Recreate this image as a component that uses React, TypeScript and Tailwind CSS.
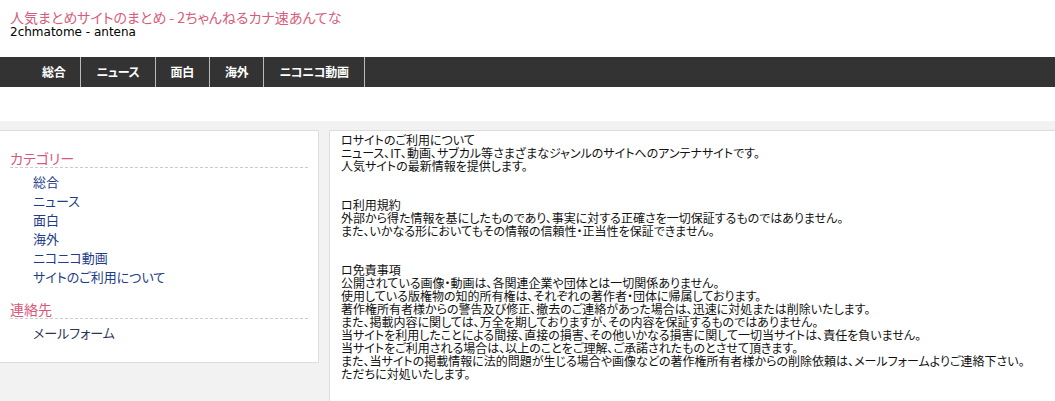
const NAV = ["総合", "ニュース", "面白", "海外", "ニコニコ動画"];

const CATEGORIES = ["総合", "ニュース", "面白", "海外", "ニコニコ動画", "サイトのご利用について"];

const SECTIONS = [
  {
    title: "ロサイトのご利用について",
    lines: [
      "ニュース、IT、動画、サブカル等さまざまなジャンルのサイトへのアンテナサイトです。",
      "人気サイトの最新情報を提供します。",
    ],
  },
  {
    title: "ロ利用規約",
    lines: [
      "外部から得た情報を基にしたものであり、事実に対する正確さを一切保証するものではありません。",
      "また、いかなる形においてもその情報の信頼性・正当性を保証できません。",
    ],
  },
  {
    title: "ロ免責事項",
    lines: [
      "公開されている画像・動画は、各関連企業や団体とは一切関係ありません。",
      "使用している版権物の知的所有権は、それぞれの著作者・団体に帰属しております。",
      "著作権所有者様からの警告及び修正、撤去のご連絡があった場合は、迅速に対処または削除いたします。",
      "また、掲載内容に関しては、万全を期しておりますが、その内容を保証するものではありません。",
      "当サイトを利用したことによる間接、直接の損害、その他いかなる損害に関して一切当サイトは、責任を負いません。",
      "当サイトをご利用される場合は、以上のことをご理解、ご承諾されたものとさせて頂きます。",
      "また、当サイトの掲載情報に法的問題が生じる場合や画像などの著作権所有者様からの削除依頼は、メールフォームよりご連絡下さい。",
      "ただちに対処いたします。",
    ],
  },
];

export default function App() {
  return (
    <div className="min-h-[401px] bg-white font-['Noto_Sans_CJK_JP',sans-serif] [font-feature-settings:'palt'] text-[#111]">
      {/* header */}
      <div className="pt-[8px] pl-[10px] h-[57px]">
        <div className="text-[14px] leading-[18px] text-[#d65d7d]">
          人気まとめサイトのまとめ - 2ちゃんねるカナ速あんてな
        </div>
        <div className="font-['DejaVu_Sans',sans-serif] text-[12px] leading-[12px] text-black">
          2chmatome - antena
        </div>
      </div>

      <nav className="h-[30px] bg-[#333] flex pl-[27px]">
        {NAV.map((item) => (
          <a
            key={item}
            className="px-[15px] border-r border-[#bbb] text-white text-[12px] font-bold tracking-[-0.3px] leading-[30px]"
          >
            {item}
          </a>
        ))}
      </nav>

      <div className="h-[34px]" />

      <div className="bg-[#f2f2f2] pt-[9px] flex items-start">
        {/* sidebar */}
        <div className="w-[319px] shrink-0 bg-white border border-l-0 border-[#ddd] pt-[18px] pb-[20px] pl-[10px] pr-[10px]">
          <h2 className="text-[14px] leading-[18px] text-[#d9587b] border-b border-dashed border-[#ccc]">
            カテゴリー
          </h2>
          <ul className="mt-[4px] pl-[23px]">
            {CATEGORIES.map((c) => (
              <li key={c} className="text-[13px] leading-[19px] text-[#1f3c88]">
                {c}
              </li>
            ))}
          </ul>
          <h2 className="mt-[14px] text-[14px] leading-[18px] text-[#d9587b] border-b border-dashed border-[#ccc]">
            連絡先
          </h2>
          <ul className="mt-[4px] pl-[23px]">
            <li className="text-[13px] leading-[19px] text-[#2a3556]">メールフォーム</li>
          </ul>
        </div>

        {/* main */}
        <div className="ml-[10px] flex-1 min-h-[280px] bg-white border border-r-0 border-[#ddd] pl-[11px] pt-[2px] text-[12px] leading-[13px]">
          {SECTIONS.map((s, i) => (
            <div key={s.title} className={i > 0 ? "mt-[26px]" : ""}>
              <div>{s.title}</div>
              {s.lines.map((l) => (
                <div key={l}>{l}</div>
              ))}
            </div>
          ))}
        </div>
      </div>
    </div>
  );
}
